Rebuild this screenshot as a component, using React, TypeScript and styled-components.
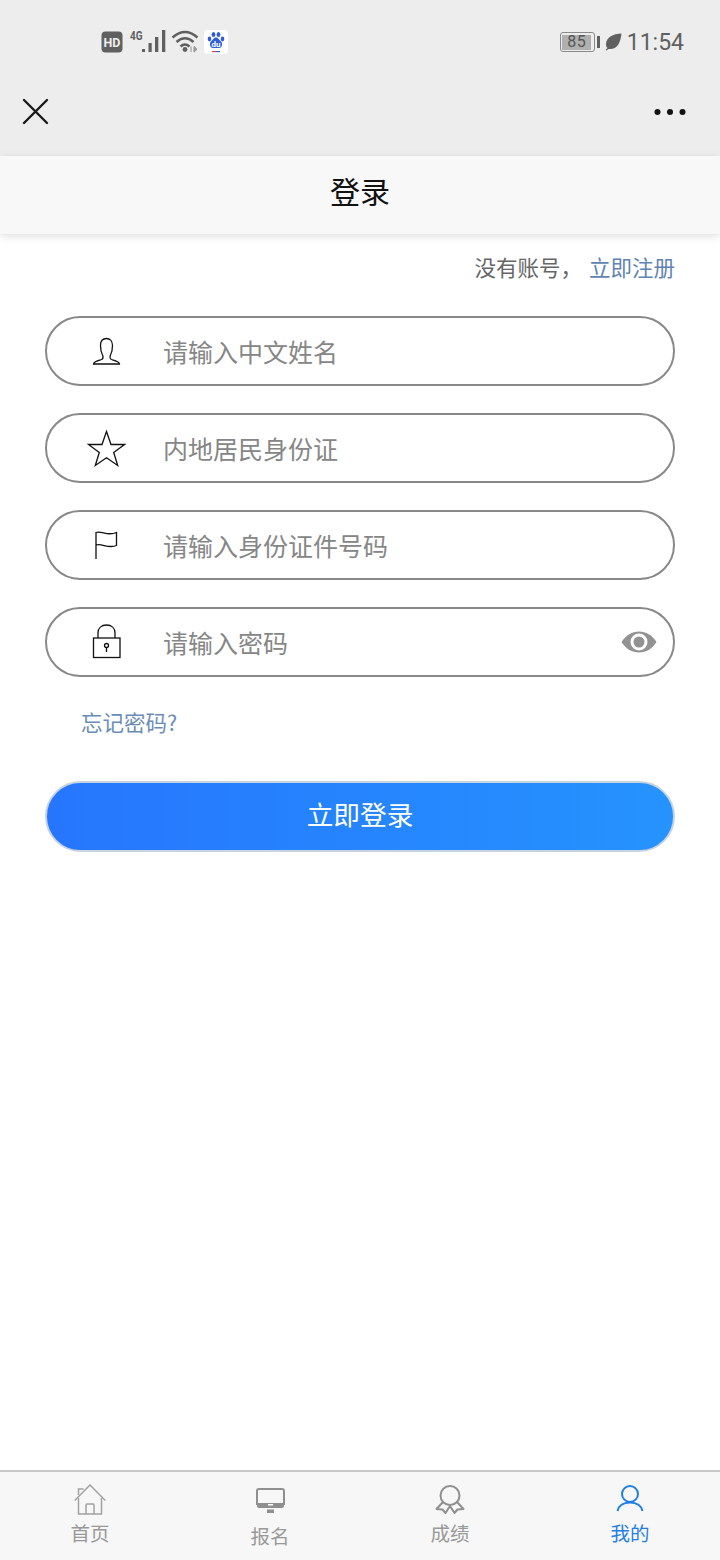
import React from "react";
import styled, { createGlobalStyle } from "styled-components";

const Global = createGlobalStyle`
  html, body { margin: 0; padding: 0; background: #fff; }
  body { font-family: "Noto Sans CJK SC", "Noto Sans", sans-serif; }
  * { box-sizing: border-box; }
  svg { display: block; }
`;

const Page = styled.div`
  width: 720px;
  height: 1560px;
  display: flex;
  flex-direction: column;
  background: #fff;
  overflow: hidden;
`;

const Chrome = styled.header`
  height: 156px;
  background: #ededed;
  display: flex;
  flex-direction: column;
`;

const StatusBar = styled.div`
  height: 84px;
  display: flex;
  align-items: center;
  justify-content: space-between;
  padding: 0 36px 0 101px;
`;

const StatusGroup = styled.div`
  display: flex;
  align-items: center;
`;

const Time = styled.span`
  font-family: Roboto, sans-serif;
  font-size: 23px;
  line-height: 28px;
  color: #606060;
  margin-left: 5px;
  padding-top: 2px;
`;

const Battery = styled.div`
  width: 35px;
  height: 20px;
  border: 1.5px solid #8a8a8a;
  border-radius: 3px;
  padding: 1.5px;
  display: flex;
`;

const BatteryFill = styled.div`
  width: 29px;
  background: #b0b0b0;
  font-family: Roboto, sans-serif;
  font-size: 16px;
  line-height: 14px;
  color: #555;
  text-align: center;
  letter-spacing: 0.5px;
`;

const BatteryCap = styled.div`
  width: 3px;
  height: 12px;
  background: #606060;
  margin: 0 5px 0 2px;
`;

const NavRow = styled.div`
  flex: 1;
  display: flex;
  align-items: center;
  justify-content: space-between;
  padding: 0 34px 16px 22px;
`;

const TitleBar = styled.div`
  height: 78px;
  background: #f8f8f8;
  display: flex;
  align-items: center;
  justify-content: center;
  padding-bottom: 10px;
  font-size: 30px;
  color: #111;
  box-shadow: 0 2px 8px rgba(0, 0, 0, 0.13);
  position: relative;
`;

const Main = styled.main`
  flex: 1;
  padding: 0 45px;
  display: flex;
  flex-direction: column;
`;

const RegisterRow = styled.div`
  height: 82px;
  padding-top: 15px;
  display: flex;
  justify-content: flex-end;
  font-size: 21.5px;
  line-height: 36px;
  color: #666;
`;

const BlueLink = styled.span`
  color: #5f84b4;
`;

const RegisterLink = styled(BlueLink)`
  margin-left: 7px;
`;

const Fields = styled.div`
  display: flex;
  flex-direction: column;
  gap: 27px;
`;

const Field = styled.div`
  height: 70px;
  border: 2px solid #888;
  border-radius: 35px;
  display: flex;
  align-items: center;
  background: #fff;
`;

const FieldIcon = styled.div`
  width: 116px;
  padding-left: 39px;
  display: flex;
  align-items: center;
  flex: none;
`;

const FieldText = styled.span`
  flex: 1;
  font-size: 25px;
  line-height: 36px;
  color: #868686;
`;

const EyeSlot = styled.div`
  display: flex;
  padding-right: 16px;
`;

const Forgot = styled(BlueLink)`
  display: block;
  font-size: 21.5px;
  line-height: 32px;
  margin: 29px 0 43px 36px;
  color: #6a8db8;
`;

const LoginButton = styled.div`
  height: 71px;
  border-radius: 36px;
  border: 2px solid #c8d3e0;
  background: linear-gradient(90deg, #2676fd, #2593fe);
  color: #fff;
  font-size: 26.7px;
  display: flex;
  align-items: center;
  justify-content: center;
  padding-bottom: 6px;
`;

const TabBar = styled.nav`
  height: 90px;
  background: #f7f7f7;
  border-top: 2px solid #c8c8c8;
  display: grid;
  grid-template-columns: repeat(4, 1fr);
`;

const Tab = styled.div<{ $active?: boolean; $low?: boolean }>`
  display: flex;
  flex-direction: column;
  align-items: center;
  padding-top: ${(p) => (p.$low ? 16 : 12)}px;
  color: ${(p) => (p.$active ? "#1f7fe6" : "#999")};
  font-size: 19.5px;
  line-height: 28px;
`;

const TabIcon = styled.div<{ $low?: boolean }>`
  height: ${(p) => (p.$low ? 34 : 35)}px;
  display: flex;
  align-items: flex-start;
`;

const Signal = () => (
  <svg width="128" height="28" viewBox="0 0 128 28">
    <rect x="0.500" y="3.500" width="21" height="21" rx="4" fill="#606060" />
    <text x="11" y="19" textAnchor="middle" fontFamily="Roboto, sans-serif" fontWeight="700" fontSize="12.500" fill="#eee">HD</text>
    <text x="29" y="12" fontFamily="Roboto, sans-serif" fontWeight="700" fontSize="13" textLength="12.500" lengthAdjust="spacingAndGlyphs" fill="#606060">4G</text>
    <g fill="#606060">
      <rect x="41" y="21" width="3" height="3" />
      <rect x="47.500" y="15" width="3.200" height="9" />
      <rect x="54" y="9" width="3.300" height="15" />
      <rect x="61" y="2" width="3.300" height="22" />
    </g>
    <g fill="none" stroke="#606060" strokeWidth="2.500">
      <path d="M71.500 9.500 Q84 -1.500 96.500 9.500" />
      <path d="M75.500 14 Q84 6.500 92.500 14" />
      <path d="M79.500 18.500 Q84 14.500 88.500 18.500" />
    </g>
    <circle cx="84" cy="21.500" r="2.400" fill="#606060" />
    <path d="M90 18.500 v5.500 M93 18.500 l3 2.800 -3 2.800z" stroke="#909090" fill="#a0a0a0" strokeWidth="1" />
    <rect x="103" y="2" width="24" height="24" rx="4" fill="#fff" />
    <g fill="#2d5fd8">
      <ellipse cx="108.500" cy="11" rx="1.800" ry="2.400" />
      <ellipse cx="112.500" cy="6.500" rx="1.900" ry="2.500" />
      <ellipse cx="117.500" cy="6.500" rx="1.900" ry="2.500" />
      <ellipse cx="121.500" cy="11" rx="1.800" ry="2.400" />
      <path d="M115 9.500 c-2.500 0 -3 2.500 -4.500 3.500 c-2.500 1.500 -2 7 1.500 7 h6 c3.500 0 4 -5.500 1.500 -7 c-1.500 -1 -2 -3.500 -4.500 -3.500z" />
    </g>
    <text x="115" y="19" textAnchor="middle" fontFamily="Roboto, sans-serif" fontWeight="700" fontSize="8" fill="#fff">du</text>
    <rect x="111" y="23" width="4" height="1.200" fill="#e04040" />
    <rect x="115" y="23" width="4" height="1.200" fill="#2d5fd8" />
  </svg>
);

const Leaf = () => (
  <svg width="17" height="18" viewBox="0 0 17 18">
    <path d="M16.500 0.500 C8 1 1.500 4 1 11 C0.900 13 1.500 14 2.500 15 L0.500 17 L1.500 17.500 L3.500 16 C12 17 15.500 10 16.500 0.500z" fill="#606060" />
  </svg>
);

const Close = () => (
  <svg width="28" height="28" viewBox="0 0 28 28">
    <path d="M2 2 L25 25 M25 2 L2 25" stroke="#1a1a1a" strokeWidth="2.400" strokeLinecap="round" />
  </svg>
);

const Dots = () => (
  <svg width="32" height="8" viewBox="0 0 32 8">
    <circle cx="3.500" cy="4" r="3" fill="#111" />
    <circle cx="16" cy="4" r="3" fill="#111" />
    <circle cx="28.500" cy="4" r="3" fill="#111" />
  </svg>
);

const UserIcon = () => (
  <svg width="40" height="40" viewBox="0 0 40 40">
    <path d="M7.500 33 H33.500 C33.500 30.500 29 29.500 25.500 28.500 C24 28 23.800 26 24.300 24.500 C26 21.500 26.500 18 26.500 14.500 C26.500 10 24 7.500 20.500 7.500 C17 7.500 14.500 10 14.500 14.500 C14.500 18 15 21.500 16.700 24.500 C17.200 26 17 28 15.500 28.500 C12 29.500 7.500 30.500 7.500 33z" fill="none" stroke="#111" strokeWidth="1.300" />
  </svg>
);

const StarIcon = () => (
  <svg width="40" height="40" viewBox="0 0 40 40">
    <path d="M20.500 3.500 L25 16.500 L38.500 16.500 L27.700 24.500 L31.700 37.500 L20.500 29.700 L9.300 37.500 L13.300 24.500 L2.500 16.500 L16 16.500z" fill="none" stroke="#111" strokeWidth="1.300" />
  </svg>
);

const FlagIcon = () => (
  <svg width="40" height="40" viewBox="0 0 40 40">
    <path d="M10 34 V7.500 C16 5.500 21 11.500 30.500 7.500 V20.500 C22 24 16 18 10 20" fill="none" stroke="#111" strokeWidth="1.300" />
  </svg>
);

const LockIcon = () => (
  <svg width="40" height="40" viewBox="0 0 40 40">
    <path d="M12 16 V11 C12 6 15.500 3 20.500 3 C25.500 3 29 6 29 11 V16" fill="none" stroke="#111" strokeWidth="1.300" />
    <rect x="7.500" y="16" width="26.500" height="19.500" fill="none" stroke="#111" strokeWidth="1.300" />
    <circle cx="20.500" cy="23.500" r="2" fill="none" stroke="#111" strokeWidth="1.300" />
    <path d="M20.500 25.500 V30" stroke="#111" strokeWidth="1.300" />
  </svg>
);

const EyeIcon = () => (
  <svg width="36" height="24" viewBox="0 0 36 24">
    <path d="M0.500 12 C5 5 11 1.500 18 1.500 C25 1.500 31 5 35.500 12 C31 19 25 22.500 18 22.500 C11 22.500 5 19 0.500 12z" fill="#929292" />
    <circle cx="18" cy="12" r="8.500" fill="#fff" />
    <circle cx="18" cy="12" r="5.500" fill="#929292" />
  </svg>
);

const HomeIcon = () => (
  <svg width="32" height="32" viewBox="0 0 32 32">
    <g fill="none" stroke="#a2a2a2" strokeWidth="1.500">
      <path d="M0.700 16.500 L16 1 L31.300 16.500" />
      <path d="M4.500 14 V30 H27.500 V14" />
      <path d="M12 30 V21 Q12 20 13 20 H19 Q20 20 20 21 V30" />
      <path d="M4.500 11 V5 H9.500" />
    </g>
  </svg>
);

const MonitorIcon = () => (
  <svg width="29" height="25" viewBox="0 0 29 25">
    <path d="M3 1 H26 A2 2 0 0 1 28 3 V16 H1 V3 A2 2 0 0 1 3 1z" fill="none" stroke="#8f8f8f" strokeWidth="2" />
    <path d="M1 15 H28 V18 A2 2 0 0 1 26 20 H3 A2 2 0 0 1 1 18z" fill="#8f8f8f" />
    <rect x="12" y="16" width="5" height="1.500" fill="#fff" />
    <rect x="11" y="21.500" width="7" height="3.500" fill="#8f8f8f" />
  </svg>
);

const AwardIcon = () => (
  <svg width="30" height="30" viewBox="0 0 30 30">
    <g fill="none" stroke="#8f8f8f" strokeWidth="2" strokeLinejoin="round">
      <circle cx="15" cy="11.500" r="9.500" />
      <path d="M8 18 L1.500 25 L7.500 25.500 L10.500 29 L15 22 L19.500 29 L22.500 25.500 L28.500 25 L22 18" />
    </g>
  </svg>
);

const PersonIcon = () => (
  <svg width="28" height="28" viewBox="0 0 28 28">
    <g fill="none" stroke="#1f7fe6" strokeWidth="2">
      <circle cx="14" cy="10" r="8" />
      <path d="M1.500 27 C2.500 22 7 18.500 14 18.500 C21 18.500 25.500 22 26.500 27" />
    </g>
  </svg>
);

const fields = [
  { icon: <UserIcon />, text: "请输入中文姓名" },
  { icon: <StarIcon />, text: "内地居民身份证" },
  { icon: <FlagIcon />, text: "请输入身份证件号码" },
  { icon: <LockIcon />, text: "请输入密码", eye: true },
];

const tabs = [
  { icon: <HomeIcon />, label: "首页" },
  { icon: <MonitorIcon />, label: "报名", low: true },
  { icon: <AwardIcon />, label: "成绩" },
  { icon: <PersonIcon />, label: "我的", active: true },
];

export default function App() {
  return (
    <Page>
      <Global />
      <Chrome>
        <StatusBar>
          <StatusGroup>
            <Signal />
          </StatusGroup>
          <StatusGroup>
            <Battery>
              <BatteryFill>85</BatteryFill>
            </Battery>
            <BatteryCap />
            <Leaf />
            <Time>11:54</Time>
          </StatusGroup>
        </StatusBar>
        <NavRow>
          <Close />
          <Dots />
        </NavRow>
      </Chrome>
      <TitleBar>登录</TitleBar>
      <Main>
        <RegisterRow>
          没有账号，<RegisterLink>立即注册</RegisterLink>
        </RegisterRow>
        <Fields>
          {fields.map((f) => (
            <Field key={f.text}>
              <FieldIcon>{f.icon}</FieldIcon>
              <FieldText>{f.text}</FieldText>
              {f.eye && (
                <EyeSlot>
                  <EyeIcon />
                </EyeSlot>
              )}
            </Field>
          ))}
        </Fields>
        <Forgot>忘记密码?</Forgot>
        <LoginButton>立即登录</LoginButton>
      </Main>
      <TabBar>
        {tabs.map((t) => (
          <Tab key={t.label} $active={t.active} $low={t.low}>
            <TabIcon $low={t.low}>{t.icon}</TabIcon>
            {t.label}
          </Tab>
        ))}
      </TabBar>
    </Page>
  );
}
